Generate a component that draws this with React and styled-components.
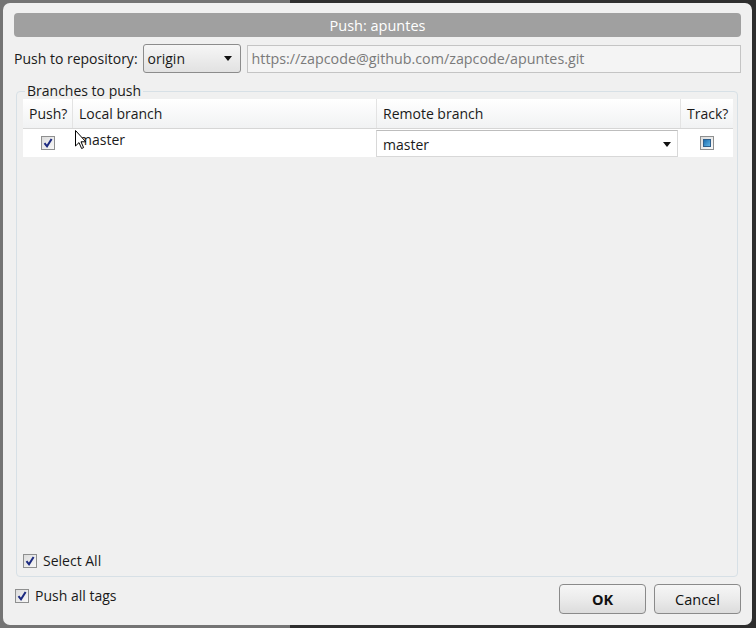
import styled, { createGlobalStyle } from "styled-components"

const Global = createGlobalStyle`
  html, body {
    margin: 0;
    height: 100%;
  }
  body {
    background: linear-gradient(to right, #747474 0, #747474 290px, #2e2e2e 290px);
    font-family: "Open Sans", "Noto Sans", sans-serif;
    overflow: hidden;
  }
`

const Dialog = styled.div`
  margin: 3px 4px 3px 3px;
  height: 622px;
  box-sizing: border-box;
  background: #f0f0f0;
  border-radius: 7px;
  padding: 10px 11px 11px 11px;
  display: flex;
  flex-direction: column;
  font-size: 14px;
  color: #1a1a1a;
`

const TitleBar = styled.div`
  height: 24px;
  background: #a0a0a0;
  border-radius: 4px;
  color: #fff;
  display: flex;
  align-items: center;
  justify-content: center;
  font-size: 14.5px;
`

const RepoRow = styled.div`
  margin-top: 7px;
  display: flex;
  align-items: center;
  gap: 6px;
  height: 29px;
`

const Label = styled.span`
  white-space: nowrap;
  margin-right: -1px;
`

const Select = styled.div`
  width: 98px;
  height: 29px;
  box-sizing: border-box;
  border: 1px solid #8c8c8c;
  border-radius: 3px;
  background: linear-gradient(#f6f6f6, #e2e2e2);
  display: flex;
  align-items: center;
  justify-content: space-between;
  padding: 0 8px 0 4px;
`

const Arrow = styled.span`
  width: 0;
  height: 0;
  border-left: 4px solid transparent;
  border-right: 4px solid transparent;
  border-top: 5px solid #111;
`

const UrlField = styled.div`
  flex: 1;
  height: 28px;
  box-sizing: border-box;
  border: 1px solid #c4c4c4;
  background: #f4f4f4;
  color: #7a7a7a;
  display: flex;
  align-items: center;
  padding-left: 4px;
  font-size: 14.3px;
`

const Group = styled.fieldset`
  flex: 1;
  margin: 9px 3px 0 2px;
  border: 1px solid #d7e0e6;
  border-radius: 4px;
  padding: 0 4px 6px 6px;
  display: flex;
  flex-direction: column;
  min-height: 0;
`

const Legend = styled.legend`
  padding: 0 2px;
  margin-left: 2px;
  line-height: 18px;
`

const Table = styled.div`
  flex: 1;
  margin-top: -1px;
  display: flex;
  flex-direction: column;
`

const Cols = styled.div`
  display: grid;
  grid-template-columns: 49px 304px 1fr 53px;
  height: ${p => p.$h}px;
  background: ${p => p.$bg};
  border-bottom: ${p => p.$line ? "1px solid #d6d6d6" : "none"};
`

const HeadCell = styled.div`
  display: flex;
  align-items: center;
  padding-left: 6px;
  border-left: ${p => p.$first ? "none" : "1px solid #e3e3e3"};
`

const Cell = styled.div`
  position: relative;
  display: flex;
  align-items: ${p => p.$top ? "flex-start" : "center"};
  justify-content: ${p => p.$center ? "center" : "flex-start"};
  padding-left: ${p => p.$center ? 0 : 7}px;
  padding-top: ${p => p.$top ? 1 : 0}px;
`

const RemoteBox = styled.div`
  flex: 1;
  height: 27px;
  margin-left: -7px;
  margin-right: 2px;
  box-sizing: border-box;
  background: #fff;
  border: 1px solid #d8d8d8;
  border-top-color: #bdbdbd;
  display: flex;
  align-items: center;
  justify-content: space-between;
  padding: 2px 6px 0 6px;
`

const Box = styled.span`
  width: 14px;
  height: 14px;
  box-sizing: border-box;
  border: 1px solid #8e8f8f;
  background: linear-gradient(135deg, #dcdcdc, #f8f8f8);
  display: inline-flex;
  align-items: center;
  justify-content: center;
  flex-shrink: 0;
`

const Filled = styled.span`
  width: 8px;
  height: 8px;
  background: linear-gradient(135deg, #1f6fb0, #5eb4e6);
  border: 1px solid #2d5f8c;
  box-sizing: border-box;
`

const CheckRow = styled.label`
  display: flex;
  align-items: center;
  gap: 6px;
  margin-left: ${p => p.$indent || 0}px;
  margin-top: ${p => p.$top || 0}px;
`

const Footer = styled.div`
  margin-top: 8px;
  height: 29px;
  display: flex;
  align-items: flex-start;
  justify-content: space-between;
`

const Buttons = styled.div`
  display: flex;
  gap: 8px;
`

const Button = styled.button`
  width: 87px;
  height: 30px;
  margin-top: -1px;
  border: 1px solid #8a8a8a;
  border-radius: 4px;
  background: linear-gradient(#f6f6f6 0%, #ebebeb 50%, #dcdcdc 100%);
  font-family: inherit;
  font-size: 14.5px;
  font-weight: ${p => p.$bold ? 700 : 400};
  color: #111;
  padding: 0;
`

const Cursor = styled.svg`
  position: absolute;
  left: 3px;
  top: 1px;
`

const Check = ({ children }) => (
  <Box>
    {children || (
      <svg width="10" height="10" viewBox="0 0 10 10">
        <path d="M1.5 5.2 L4 8.3 L8.6 1" fill="none" stroke="#1c2a80" strokeWidth="2" />
      </svg>
    )}
  </Box>
)

export default function App() {
  return (
    <>
      <Global />
      <Dialog>
        <TitleBar>Push: apuntes</TitleBar>
        <RepoRow>
          <Label>Push to repository:</Label>
          <Select>
            <span>origin</span>
            <Arrow />
          </Select>
          <UrlField>https://zapcode@github.com/zapcode/apuntes.git</UrlField>
        </RepoRow>
        <Group>
          <Legend>Branches to push</Legend>
          <Table>
            <Cols $h={29} $bg="linear-gradient(#ffffff, #f1f2f3)" $line>
              <HeadCell $first>Push?</HeadCell>
              <HeadCell>Local branch</HeadCell>
              <HeadCell>Remote branch</HeadCell>
              <HeadCell>Track?</HeadCell>
            </Cols>
            <Cols $h={28} $bg="#ffffff">
              <Cell $center><Check /></Cell>
              <Cell $top>
                master
                <Cursor width="12" height="20" viewBox="0 0 12 20">
                  <path d="M0.5 0.5 L0.5 16 L4 12.6 L6.6 18.5 L8.6 17.6 L6 11.8 L10.8 11.8 Z" fill="#fff" stroke="#000" strokeWidth="1" />
                </Cursor>
              </Cell>
              <Cell>
                <RemoteBox>
                  <span>master</span>
                  <Arrow />
                </RemoteBox>
              </Cell>
              <Cell $center><Check><Filled /></Check></Cell>
            </Cols>
          </Table>
          <CheckRow $top={2}>
            <Check />
            Select All
          </CheckRow>
        </Group>
        <Footer>
          <CheckRow $indent={1} $top={1}>
            <Check />
            Push all tags
          </CheckRow>
          <Buttons>
            <Button $bold>OK</Button>
            <Button>Cancel</Button>
          </Buttons>
        </Footer>
      </Dialog>
    </>
  )
}
